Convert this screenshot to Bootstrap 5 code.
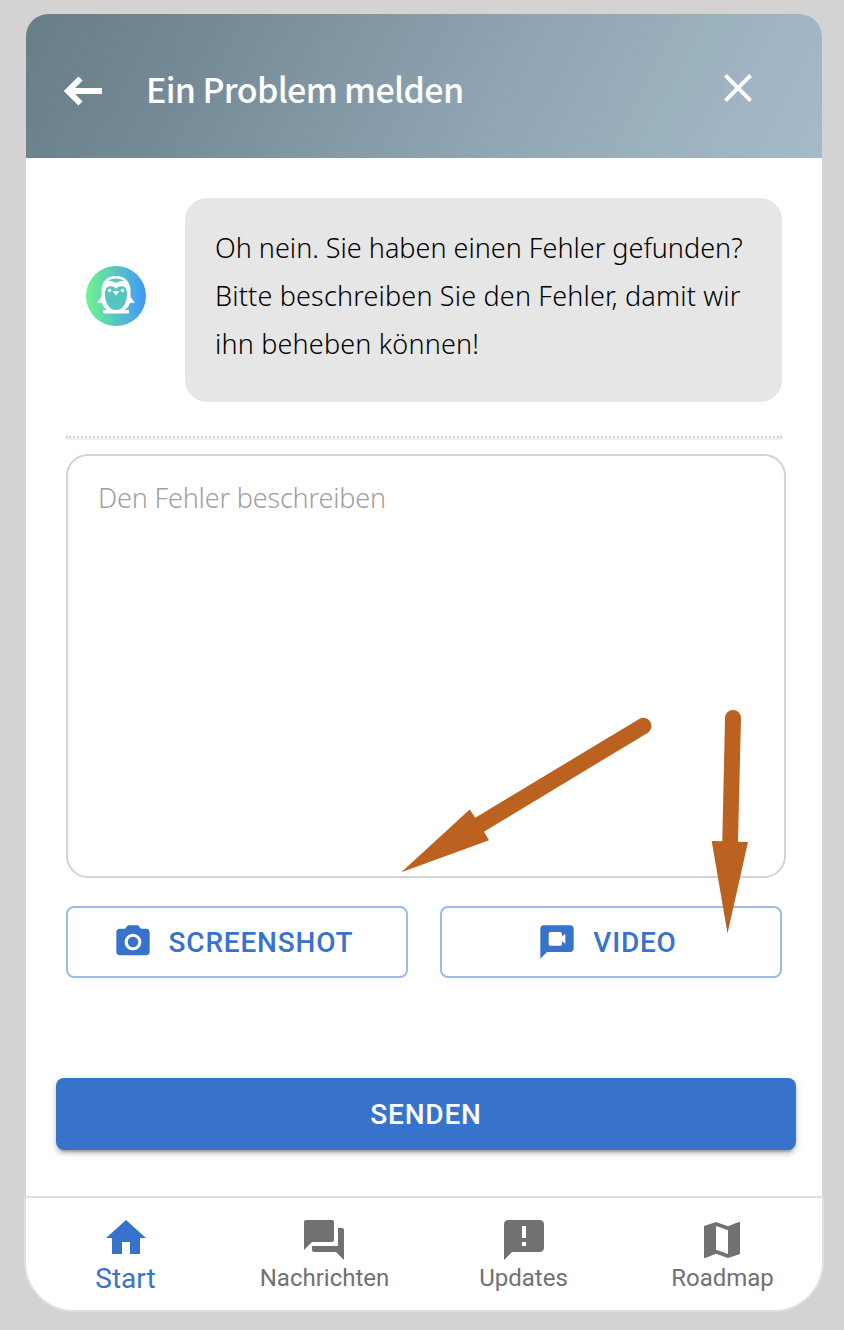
<!DOCTYPE html>
<html lang="de">
<head>
<meta charset="utf-8">
<meta name="viewport" content="width=device-width, initial-scale=1">
<title>Ein Problem melden</title>
<link href="https://cdn.jsdelivr.net/npm/bootstrap@5.3.0/dist/css/bootstrap.min.css" rel="stylesheet">
<style>
  body { background: #d3d3d3; height: 1330px; overflow: hidden; font-family: "Noto Sans", sans-serif; color: #000; }
  .widget { width: 800px; margin-left: 24px; padding-top: 14px; }
  .pane { width: 796px; height: 1182px; background: #fff; border-radius: 22px 22px 0 0; overflow: hidden; }
  .topbar { height: 144px; padding: 8px 60px 0 36px; background: linear-gradient(118deg, #677d88 0%, #738a96 21%, #8fa4b2 58%, #9bb2bf 81%, #9eb2c1 84%, #a5bbc9 100%); }
  .topbar h1 { font: 500 34px/48px "Noto Sans CJK JP", sans-serif; letter-spacing: -.66px; margin-left: 40px; padding-bottom: 3px; }
  .bare { border: 0; background: none; padding: 0; line-height: 0; color: #fff; }
  .content-area { padding: 40px 36px 0 40px; }
  .bubble { width: 597px; height: 204px; border-radius: 22px; background: #e6e6e6; padding: 26px 0 0 30px; font-weight: 300; font-size: 27px; line-height: 48px; white-space: nowrap; }
  .bubble span { display: block; width: max-content; }
  .bubble span + span { letter-spacing: .17px; }
  .rule { width: 716px; height: 4px; margin-top: 34px; border-top: 2px dotted #d0d0d0; border-bottom: 2px solid #eee; }
  .field { width: 720px; height: 424px; margin-top: 14px; border: 2px solid #d3d3d3; border-radius: 22px; padding: 22px 30px; resize: none; font-size: 27px; font-weight: 300; letter-spacing: -.18px; line-height: 40px; display: block; }
  .field::placeholder { color: #a0a0a0; opacity: 1; }
  .actions { width: 716px; margin-top: 28px; gap: 32px; }
  .act { --bs-btn-color: #3873cb; --bs-btn-border-color: #9fbae6; --bs-btn-padding-y: 0; --bs-btn-padding-x: 0; height: 72px; border-width: 2px; border-radius: 8px; font: 500 28px/40px Roboto, sans-serif; letter-spacing: .8px; padding-right: 8px; }
  .act span { padding-top: 2px; }
  .send { width: 740px; height: 72px; margin: 100px 0 0 -10px; --bs-btn-color: #fff; --bs-btn-bg: #3873cb; border: 0; border-radius: 8px; font: 500 28px/40px Roboto, sans-serif; letter-spacing: .8px; padding-top: 8px; box-shadow: 0 6px 2px -4px rgba(0,0,0,.2), 0 4px 4px rgba(0,0,0,.14), 0 2px 10px rgba(0,0,0,.12); }
  .tabs { width: 800px; height: 116px; background: #fff; border: 2px solid #e0e0e0; border-radius: 0 0 50px 50px; font-family: Roboto, sans-serif; font-size: 24px; color: #717171; }
  .tabs .nav-link { color: inherit; padding: 18px 0 0; line-height: 28px; }
  .tabs .nav-link.active { color: #3873cb; font-size: 28px; padding-top: 16px; }
  .tabs svg { display: block; margin: 0 auto; }
  .tabs .nav-link:nth-child(even) svg { margin-left: calc(50% - 25px); }
  .active .tab-text { display: block; padding-top: 3px; }
  .pointers { position: absolute; left: 0; top: 0; pointer-events: none; }
</style>
</head>
<body>
<main class="widget">
  <section class="pane mx-auto">
    <header class="topbar d-flex align-items-center text-white">
      <button class="bare" aria-label="Zurück"><svg width="44" height="36" viewBox="0 0 44 36"><path d="M40 19H7M18.500 6.500 6 19l12.500 12.500" fill="none" stroke="#fff" stroke-width="6"/></svg></button>
      <h1 class="mb-0">Ein Problem melden</h1>
      <button class="bare ms-auto" aria-label="Schließen"><svg width="48" height="48" viewBox="0 0 24 24"><path fill="#fff" d="M19 6.41 17.59 5 12 10.59 6.41 5 5 6.41 10.59 12 5 17.59 6.41 19 12 13.41 17.59 19 19 17.59 13.41 12z" transform="translate(0 -1)"/></svg></button>
    </header>
    <div class="content-area">
      <div class="d-flex align-items-center">
        <svg class="flex-shrink-0" style="margin:0 39px 8px 20px" width="60" height="60" viewBox="0 0 60 60" role="img" aria-label="Pinguin">
          <defs><linearGradient id="av"><stop offset="0" stop-color="#70f48c"/><stop offset="1" stop-color="#4097fb"/></linearGradient></defs>
          <circle cx="30" cy="30" r="30" fill="url(#av)"/>
          <path fill="#fff" d="M30 10C21 10 15.500 16 15.500 24.500V30c0 2-4 5-4 7h4.500c1 3.500 3 5.500 5 7h-4v3.500h26V44h-4c2-1.500 4-3.500 5-7h4.500c0-2-4-5-4-7v-5.500C44.500 16 39 10 30 10z"/>
          <path fill="#55c5c1" d="M30 23c2-3 5-3 7-2.500 3 .7 4 3.500 4 7C41 37 37 44 30 44s-11-7-11-16.500c0-3.500 1-6.300 4-7 2-.5 5-.5 7 2.500z"/>
          <path fill="#55c5c1" d="M21.500 15.500c4-4 13-4 17 0-3-1-6-.3-8.500 1.500-2.500-1.800-5.500-2.500-8.500-1.500z"/>
          <g fill="#fff"><circle cx="23.500" cy="24.500" r="1.700"/><circle cx="36.500" cy="24.500" r="1.700"/><path d="M26.500 25.500c2-1 5-1 7 0L30 29.500z"/></g>
        </svg>
        <div class="bubble"><span>Oh nein. Sie haben einen Fehler gefunden?</span><span>Bitte beschreiben Sie den Fehler, damit wir</span><span>ihn beheben können!</span></div>
      </div>
      <div class="rule"></div>
      <textarea class="field" placeholder="Den Fehler beschreiben" aria-label="Den Fehler beschreiben"></textarea>
      <div class="actions d-flex">
        <button class="btn act flex-fill w-50 d-flex align-items-center justify-content-center"><svg class="me-3" width="40" height="40" viewBox="0 0 24 24" fill="currentColor"><circle cx="12" cy="12" r="3.2"/><path d="M9 2 7.170 4H4c-1.100 0-2 .9-2 2v12c0 1.100.9 2 2 2h16c1.100 0 2-.9 2-2V6c0-1.100-.9-2-2-2h-3.170L15 2H9zm3 15c-2.760 0-5-2.240-5-5s2.240-5 5-5 5 2.240 5 5-2.240 5-5 5z"/></svg><span>SCREENSHOT</span></button>
        <button class="btn act flex-fill w-50 d-flex align-items-center justify-content-center"><svg class="me-3" width="40" height="40" viewBox="0 0 24 24" fill="currentColor"><path d="M20 2H4c-1.100 0-2 .9-2 2v18l4-4h14c1.100 0 2-.9 2-2V4c0-1.100-.9-2-2-2zm-3 11-2-1.500V13c0 .8-.5 1.300-1.200 1.300H8.200C7.500 14.300 7 13.800 7 13V7.300C7 6.500 7.500 6 8.200 6h5.600c.7 0 1.200.5 1.200 1.300V8.500L17 7z"/></svg><span>VIDEO</span></button>
      </div>
      <button class="btn send d-block">SENDEN</button>
    </div>
  </section>
  <nav class="tabs nav nav-justified flex-nowrap text-center">
    <a class="nav-link active" href="#"><svg width="48" height="48" viewBox="0 0 24 24" fill="currentColor"><path d="M10 20v-6h4v6h5v-8h3L12 3 2 12h3v8z"/></svg><span class="tab-text">Start</span></a>
    <a class="nav-link" href="#"><svg width="48" height="48" viewBox="0 0 24 24" fill="currentColor"><path d="M21 6h-2v9H6v2c0 .55.45 1 1 1h11l4 4V7c0-.55-.45-1-1-1zm-4 6V3c0-.55-.45-1-1-1H3c-.55 0-1 .45-1 1v14l4-4h10c.55 0 1-.45 1-1z"/></svg>Nachrichten</a>
    <a class="nav-link" href="#"><svg width="48" height="48" viewBox="0 0 24 24" fill="currentColor"><path d="M20 2H4c-1.100 0-1.990.9-1.990 2L2 22l4-4h14c1.100 0 2-.9 2-2V4c0-1.100-.9-2-2-2zm-7 13h-2v-2h2v2zm0-4h-2V5h2v6z"/></svg>Updates</a>
    <a class="nav-link" href="#"><svg width="48" height="48" viewBox="0 0 24 24" fill="currentColor"><path d="m20.500 3-.16.03L15 5.100 9 3 3.360 4.900c-.21.070-.36.250-.36.480V20.500c0 .28.220.5.5.5l.16-.03L9 18.900l6 2.100 5.640-1.900c.21-.070.36-.25.36-.48V3.500c0-.28-.22-.5-.5-.5zM15 19l-6-2.110V5l6 2.110V19z"/></svg>Roadmap</a>
  </nav>
</main>
<svg class="pointers" width="844" height="1330" viewBox="0 0 844 1330" fill="#bb6220" aria-hidden="true">
  <path d="M401.300 872.300 469.700 809.500 475.300 817.700 639.200 719A8 8 0 0 1 647.500 732.900L484 831.700 489 840.300z"/>
  <path d="M727.500 933.500 711.700 841 722.300 841.300 725 718A8 8 0 0 1 741 718L738 841.700 748 842z"/>
</svg>
<script src="https://cdn.jsdelivr.net/npm/bootstrap@5.3.0/dist/js/bootstrap.bundle.min.js"></script>
</body>
</html>
